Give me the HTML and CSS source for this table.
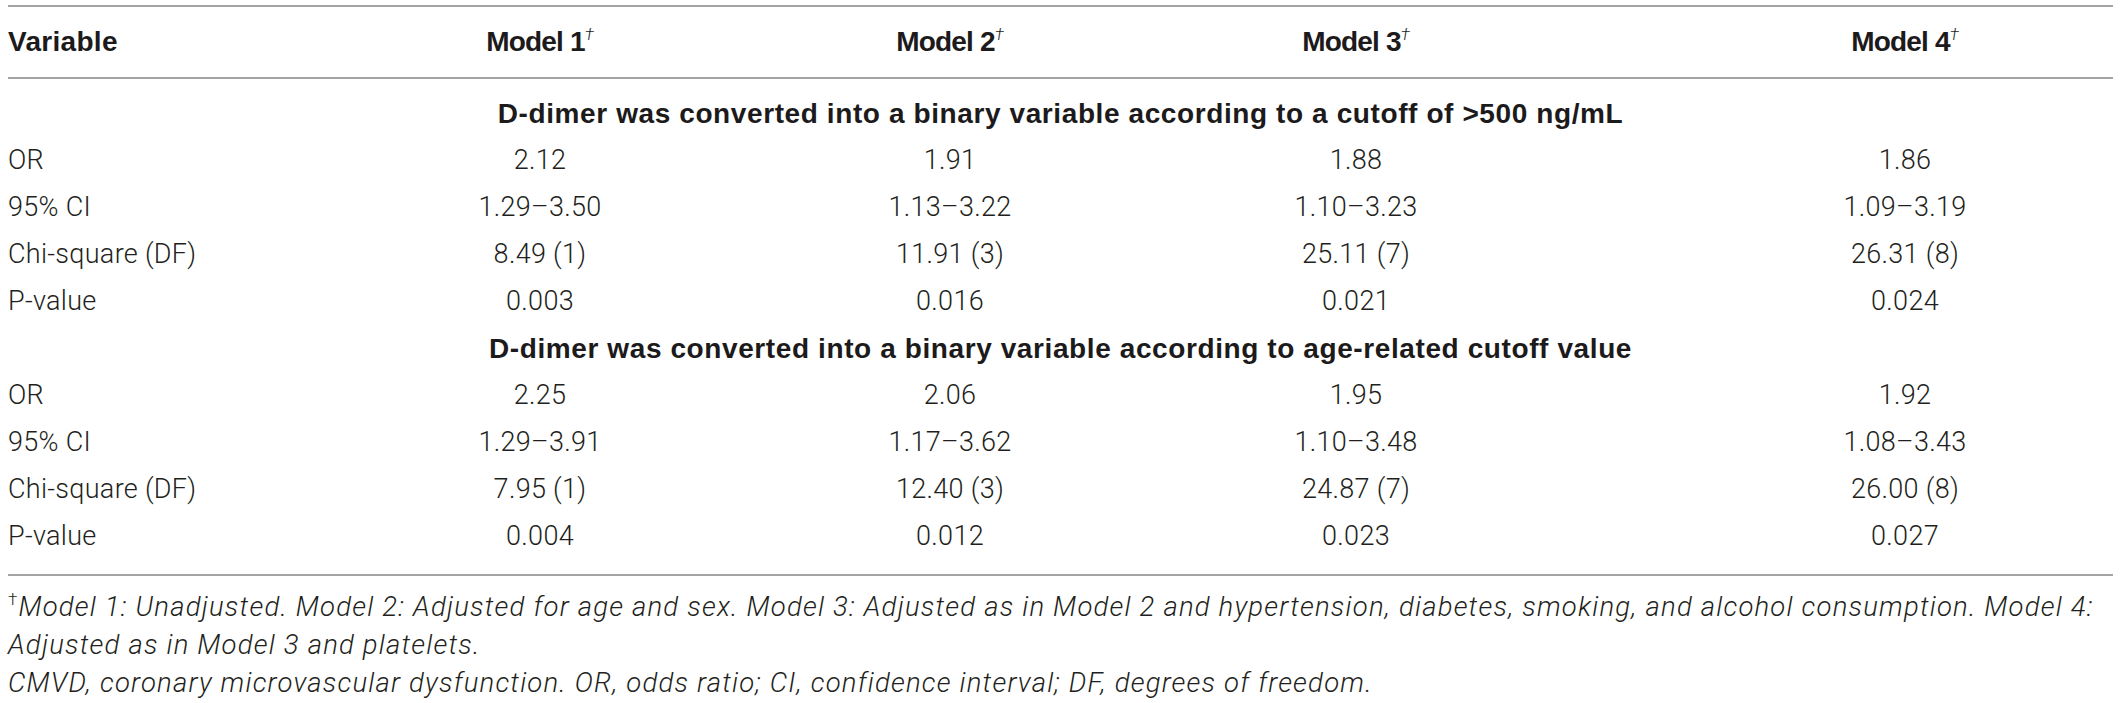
FILE: index.html
```html
<!DOCTYPE html>
<html lang="en">
<head>
<meta charset="utf-8">
<title>Table</title>
<link rel="stylesheet" href="styles.css">
</head>
<body>
<div class="wrap">
  <table class="tbl">
    <colgroup>
      <col class="c-var">
      <col class="c-m1">
      <col class="c-m2">
      <col class="c-m3">
      <col class="c-m4">
    </colgroup>
    <thead>
      <tr>
        <th class="var">Variable</th>
        <th class="model">Model 1<sup>†</sup></th>
        <th class="model">Model 2<sup>†</sup></th>
        <th class="model">Model 3<sup>†</sup></th>
        <th class="model m4">Model 4<sup>†</sup></th>
      </tr>
    </thead>
    <tbody>
      <tr class="group first">
        <td colspan="5">D-dimer was converted into a binary variable according to a cutoff of &gt;500 ng/mL</td>
      </tr>
      <tr><td class="var">OR</td><td>2.12</td><td>1.91</td><td>1.88</td><td class="m4">1.86</td></tr>
      <tr><td class="var">95% CI</td><td>1.29–3.50</td><td>1.13–3.22</td><td>1.10–3.23</td><td class="m4">1.09–3.19</td></tr>
      <tr><td class="var">Chi-square (DF)</td><td>8.49 (1)</td><td>11.91 (3)</td><td>25.11 (7)</td><td class="m4">26.31 (8)</td></tr>
      <tr><td class="var">P-value</td><td>0.003</td><td>0.016</td><td>0.021</td><td class="m4">0.024</td></tr>
      <tr class="group">
        <td colspan="5">D-dimer was converted into a binary variable according to age-related cutoff value</td>
      </tr>
      <tr><td class="var">OR</td><td>2.25</td><td>2.06</td><td>1.95</td><td class="m4">1.92</td></tr>
      <tr><td class="var">95% CI</td><td>1.29–3.91</td><td>1.17–3.62</td><td>1.10–3.48</td><td class="m4">1.08–3.43</td></tr>
      <tr><td class="var">Chi-square (DF)</td><td>7.95 (1)</td><td>12.40 (3)</td><td>24.87 (7)</td><td class="m4">26.00 (8)</td></tr>
      <tr class="last"><td class="var">P-value</td><td>0.004</td><td>0.012</td><td>0.023</td><td class="m4">0.027</td></tr>
    </tbody>
  </table>
  <div class="notes">
    <p><sup class="dag">†</sup>Model 1: Unadjusted. Model 2: Adjusted for age and sex. Model 3: Adjusted as in Model 2 and hypertension, diabetes, smoking, and alcohol consumption. Model 4: Adjusted as in Model 3 and platelets.</p>
    <p>CMVD, coronary microvascular dysfunction. OR, odds ratio; CI, confidence interval; DF, degrees of freedom.</p>
  </div>
</div>
</body>
</html>
```

FILE: styles.css
```css
html, body {
  margin: 0;
  padding: 0;
  background: #ffffff;
}

body {
  font-family: Roboto, "Liberation Sans", Arial, sans-serif;
  font-weight: 300;
  color: #231f20;
}

.wrap {
  width: 2105px;
  padding: 5px 0 0 8px;
}

.tbl {
  width: 2105px;
  table-layout: fixed;
  border-collapse: collapse;
  border-top: 2px solid #a4a4a4;
  border-bottom: 2px solid #a4a4a4;
}

.c-var { width: 332px; }
.c-m1 { width: 400px; }
.c-m2 { width: 420px; }
.c-m3 { width: 392px; }
.c-m4 { width: 561px; }

.tbl th,
.tbl td {
  padding: 0;
  text-align: center;
  vertical-align: middle;
  white-space: nowrap;
}

.tbl thead th {
  height: 70px;
  font-family: "Liberation Sans", Arial, sans-serif;
  font-size: 28px;
  font-weight: bold;
  letter-spacing: 0.3px;
  color: #1c1a1b;
  border-bottom: 2px solid #a4a4a4;
}

.tbl thead th.model {
  letter-spacing: -0.8px;
}

.tbl th sup {
  font-family: Roboto, "Liberation Sans", sans-serif;
  font-style: italic;
  font-weight: 300;
  font-size: 17px;
  line-height: 0;
  vertical-align: 11px;
  letter-spacing: 0;
}

.tbl .var {
  text-align: left;
}

.tbl .m4 {
  padding-left: 145px;
}

.tbl tbody td {
  font-size: 27px;
  letter-spacing: 0.3px;
  line-height: 47px;
}

.tbl tbody tr.group td {
  font-family: "Liberation Sans", Arial, sans-serif;
  font-weight: bold;
  font-size: 28px;
  letter-spacing: 0.6px;
  color: #1c1a1b;
}

.tbl tbody tr.first td {
  padding-top: 11px;
}

.tbl tbody tr.last td {
  padding-bottom: 14px;
}

.notes {
  margin-top: 12px;
  font-size: 27.5px;
  letter-spacing: 1.2px;
  line-height: 38px;
  font-style: italic;
}

.notes p {
  margin: 0;
}

.notes .dag {
  font-style: normal;
  font-size: 17px;
  line-height: 0;
  vertical-align: 11px;
  margin-right: 1px;
  letter-spacing: 0;
}
```
